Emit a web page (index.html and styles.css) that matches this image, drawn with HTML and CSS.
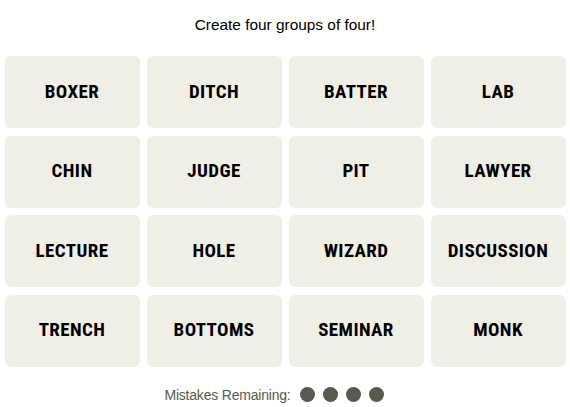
FILE: index.html
```html
<!DOCTYPE html>
<html>
<head>
<meta charset="utf-8">
<link rel="stylesheet" href="styles.css">
</head>
<body>
<main class="game">
  <p class="prompt">Create four groups of four!</p>
  <div class="board">
    <div class="tile">BOXER</div>
    <div class="tile">DITCH</div>
    <div class="tile">BATTER</div>
    <div class="tile">LAB</div>
    <div class="tile">CHIN</div>
    <div class="tile">JUDGE</div>
    <div class="tile">PIT</div>
    <div class="tile">LAWYER</div>
    <div class="tile">LECTURE</div>
    <div class="tile">HOLE</div>
    <div class="tile">WIZARD</div>
    <div class="tile">DISCUSSION</div>
    <div class="tile">TRENCH</div>
    <div class="tile">BOTTOMS</div>
    <div class="tile">SEMINAR</div>
    <div class="tile">MONK</div>
  </div>
  <div class="mistakes">
    <span class="mistakes-label">Mistakes Remaining:</span>
    <span class="dots">
      <span class="dot"></span><span class="dot"></span><span class="dot"></span><span class="dot"></span>
    </span>
  </div>
</main>
</body>
</html>
```

FILE: styles.css
```css
* { box-sizing: border-box; }
html, body { margin: 0; padding: 0; background: #fff; }
body { font-family: "Liberation Sans", Arial, sans-serif; color: #000; }
.game {
  width: 561px;
  margin: 0 auto;
  padding-top: 16px;
  display: flex;
  flex-direction: column;
  align-items: center;
}
.prompt {
  margin: 0;
  font-size: 15.4px;
  line-height: 18px;
  height: 18px;
}
.board {
  margin-top: 22px;
  width: 561px;
  display: grid;
  grid-template-columns: repeat(4, 135px);
  grid-auto-rows: 72px;
  column-gap: 7px;
  row-gap: 7.5px;
}
.tile {
  background: #efefe6;
  border-radius: 6px;
  display: flex;
  align-items: center;
  justify-content: center;
  padding-bottom: 2px;
  font-family: "Roboto Condensed", "Liberation Sans Narrow", "DejaVu Sans Condensed", sans-serif;
  font-weight: 700;
  font-size: 19px;
  letter-spacing: 0.4px;
  color: #000;
}
.mistakes {
  margin-top: 20px;
  padding-right: 22px;
  display: flex;
  align-items: center;
  gap: 9px;
  color: #5a594e;
  font-size: 14px;
}
.mistakes-label { letter-spacing: -0.2px; }
.dots { display: flex; gap: 8px; }
.dot {
  width: 15px;
  height: 15px;
  border-radius: 50%;
  background: #5a594e;
}
```
